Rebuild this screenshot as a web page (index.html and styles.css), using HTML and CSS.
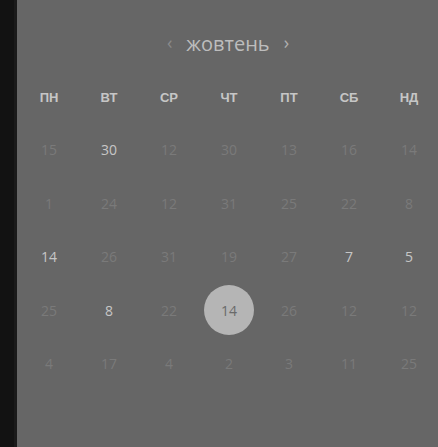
FILE: index.html
```html
<!DOCTYPE html>
<html lang="uk">
<head>
<meta charset="utf-8">
<link rel="stylesheet" href="styles.css">
</head>
<body>
<div class="app">
  <div class="rail"></div>
  <div class="panel">
    <div class="month">
      <span class="nav">&#8249;</span>
      <span class="title">жовтень</span>
      <span class="nav">&#8250;</span>
    </div>
    <div class="weekdays">
      <span>ПН</span><span>ВТ</span><span>СР</span><span>ЧТ</span><span>ПТ</span><span>СБ</span><span>НД</span>
    </div>
    <div class="days">
      <span class="d">15</span><span class="d on">30</span><span class="d">12</span><span class="d">30</span><span class="d">13</span><span class="d">16</span><span class="d">14</span>
      <span class="d">1</span><span class="d">24</span><span class="d">12</span><span class="d">31</span><span class="d">25</span><span class="d">22</span><span class="d">8</span>
      <span class="d on">14</span><span class="d">26</span><span class="d">31</span><span class="d">19</span><span class="d">27</span><span class="d on">7</span><span class="d on">5</span>
      <span class="d">25</span><span class="d on">8</span><span class="d">22</span><span class="d sel"><span class="dot">14</span></span><span class="d">26</span><span class="d">12</span><span class="d">12</span>
      <span class="d">4</span><span class="d">17</span><span class="d">4</span><span class="d">2</span><span class="d">3</span><span class="d">11</span><span class="d">25</span>
    </div>
  </div>
</div>
</body>
</html>
```
FILE: styles.css
```css
html, body {
  margin: 0;
  padding: 0;
  background: #121212;
}
.app {
  display: flex;
  width: 438px;
  height: 447px;
  overflow: hidden;
}
.rail {
  width: 14px;
  flex: none;
  background: #121212;
  border-right: 3px solid #1a1a1a;
}
.panel {
  flex: 1;
  background: #666666;
  padding: 30px 0 0 2px;
  font-family: "Open Sans", "Liberation Sans", sans-serif;
}
.month {
  display: flex;
  justify-content: center;
  align-items: center;
  gap: 14px;
  height: 28px;
  margin-left: -2px;
}
.title {
  font-size: 20px;
  color: #bdbdbd;
  line-height: 28px;
}
.nav {
  font-size: 18px;
  color: #b0b0b0;
  line-height: 28px;
  margin-top: -4px;
}
.nav:first-child { color: #8a8a8a; }
.weekdays {
  display: grid;
  grid-template-columns: repeat(7, 60px);
  margin-top: 30px;
  height: 20px;
  align-items: center;
}
.weekdays span {
  text-align: center;
  font-family: "Liberation Sans", Arial, sans-serif;
  font-weight: 700;
  font-size: 13px;
  color: #c6c6c6;
  line-height: 20px;
}
.days {
  display: grid;
  grid-template-columns: repeat(7, 60px);
  grid-auto-rows: 53.5px;
  margin-top: 15px;
}
.d {
  display: flex;
  align-items: center;
  justify-content: center;
  font-size: 14px;
  color: #7a7a7a;
}
.d.on { color: #c6c6c6; }
.dot {
  width: 50px;
  height: 50px;
  border-radius: 50%;
  background: #b5b5b5;
  color: #6a6a6a;
  display: flex;
  align-items: center;
  justify-content: center;
  font-size: 14px;
}
```
